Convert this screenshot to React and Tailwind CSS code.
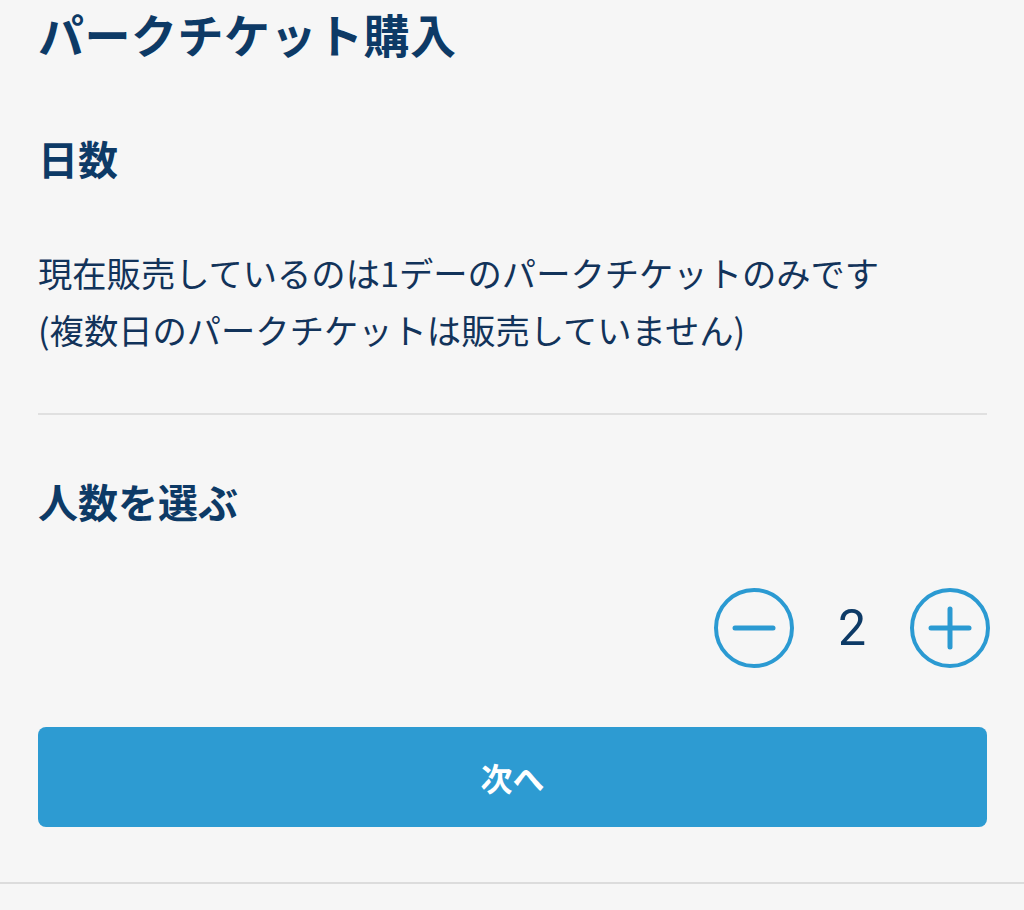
export default function App() {
  const jp = { fontFamily: '"Noto Sans CJK JP", "Noto Sans", sans-serif' };
  return (
    <div className="w-[1024px] h-[910px] bg-[#f6f6f6] text-[#0d3a66] overflow-hidden" style={jp}>
      <div className="px-[38px] pr-[37px]">
        <h1 className="text-[46px] leading-[66px] font-bold tracking-[0.5px]">パークチケット購入</h1>
        <h2 className="mt-[62px] text-[40px] leading-[60px] font-bold">日数</h2>
        <p className="mt-[56px] text-[34.3px] leading-[57px] text-[#12335a]">
          現在販売しているのは1デーのパークチケットのみです
          <br />
          (複数日のパークチケットは販売していません)
        </p>
        <div className="mt-[55px] h-[2px] bg-[#e0e0e0]" />
        <h2 className="mt-[56px] text-[40px] leading-[60px] font-bold">人数を選ぶ</h2>
        <div className="mt-[57px] flex items-center justify-end -mr-[3px]">
          <button className="w-[80px] h-[80px] rounded-full border-[4px] border-[#2b9ad2] flex items-center justify-center">
            <svg width="44" height="44" viewBox="0 0 44 44">
              <line x1="3" y1="22" x2="41" y2="22" stroke="#2b9ad2" strokeWidth="5" strokeLinecap="round" />
            </svg>
          </button>
          <div className="w-[116px] text-center text-[50px] leading-[60px] text-[#0d3a66]" style={{ fontFamily: 'Roboto, "Liberation Sans", sans-serif' }}>2</div>
          <button className="w-[80px] h-[80px] rounded-full border-[4px] border-[#2b9ad2] flex items-center justify-center">
            <svg width="44" height="44" viewBox="0 0 44 44">
              <line x1="3" y1="22" x2="41" y2="22" stroke="#2b9ad2" strokeWidth="5" strokeLinecap="round" />
              <line x1="22" y1="3" x2="22" y2="41" stroke="#2b9ad2" strokeWidth="5" strokeLinecap="round" />
            </svg>
          </button>
        </div>
        <button className="mt-[59px] w-full h-[100px] rounded-[8px] bg-[#2d9bd2] text-white text-[32px] font-bold flex items-center justify-center">
          次へ
        </button>
      </div>
      <div className="mt-[55px] h-[2px] bg-[#dcdcdc]" />
    </div>
  );
}
